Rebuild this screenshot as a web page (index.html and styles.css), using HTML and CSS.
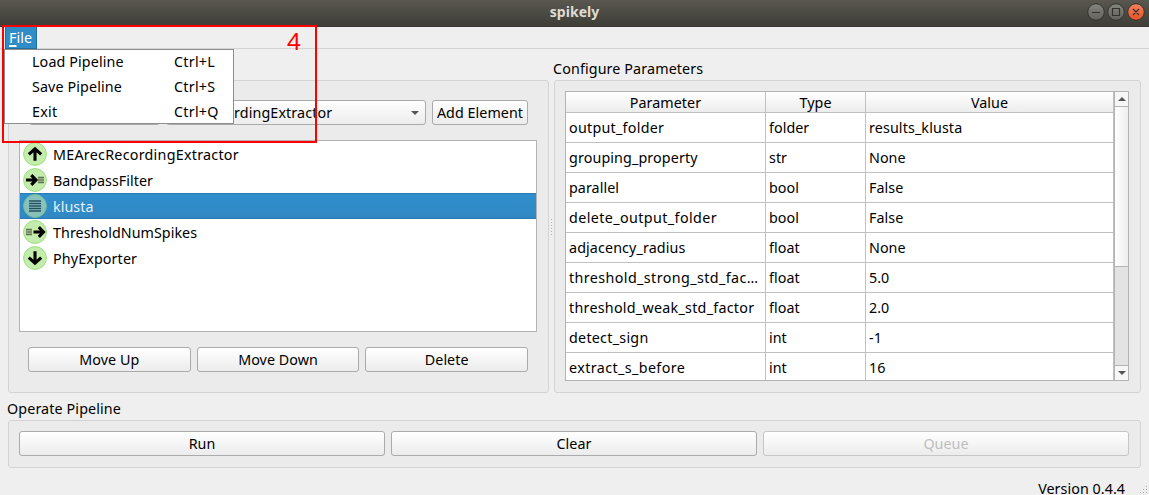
FILE: index.html
```html
<!DOCTYPE html>
<html lang="en">
<head>
<meta charset="utf-8">
<title>spikely</title>
<link rel="stylesheet" href="styles.css">
</head>
<body>
<div class="window">
  <header class="titlebar">
    <span class="title">spikely</span>
    <svg class="controls" width="58" height="20" viewBox="0 0 58 20">
      <defs>
        <linearGradient id="gray" x2="0" y2="1"><stop offset="0" stop-color="#858580"/><stop offset="1" stop-color="#62615c"/></linearGradient>
        <linearGradient id="orange" x2="0" y2="1"><stop offset="0" stop-color="#f58360"/><stop offset="1" stop-color="#e65123"/></linearGradient>
      </defs>
      <g stroke="#33322e"><circle cx="9" cy="10" r="8.3" fill="url(#gray)"/><circle cx="29" cy="10" r="8.3" fill="url(#gray)"/><circle cx="49" cy="10" r="8.3" fill="url(#orange)"/></g>
      <path d="M5 10.5H13M25.5 6.5H32.5V13.5H25.5ZM46 7L52 13M52 7L46 13" fill="none" stroke="#33322e" stroke-width="1.2"/>
    </svg>
  </header>
  <nav class="menubar"><span class="menu-title"><u>F</u>ile</span></nav>

  <main class="panes">
    <section class="pane pipeline">
      <h2 class="caption">&nbsp;</h2>
      <div class="group build">
        <div class="chooser">
          <div class="button combo kind"></div>
          <div class="button combo element"><span class="loose">rdingExtractor</span><i class="down"></i></div>
          <div class="button add"><span>Add Element</span></div>
        </div>
        <ul class="elements">
          <li><svg class="icon" viewBox="0 0 24 24"><circle class="disc" cx="12" cy="12" r="11.4"/><path class="bold" d="M12 18.8V7M5.8 12.4L12 6.8L18.2 12.4"/></svg><span class="wide">MEArecRecordingExtractor</span></li>
          <li><svg class="icon" viewBox="0 0 24 24"><circle class="disc" cx="12" cy="12" r="11.4"/><path class="bold" d="M3 12H12M8.3 7.2L13 12L8.3 16.8"/><path class="fine" d="M15 9.3H21M15 11.1H21M15 12.9H21M15 14.7H21"/></svg><span>BandpassFilter</span></li>
          <li class="selected"><svg class="icon" viewBox="0 0 24 24"><circle class="disc" cx="12" cy="12" r="11.4"/><path class="lines" d="M6 7H18M6 9.5H18M6 12H18M6 14.5H18M6 17H18"/></svg><span>klusta</span></li>
          <li><svg class="icon" viewBox="0 0 24 24"><circle class="disc" cx="12" cy="12" r="11.4"/><path class="bold" d="M10.5 12H20M15.8 7.2L20.5 12L15.8 16.8"/><path class="fine" d="M3 9.3H9M3 11.1H9M3 12.9H9M3 14.7H9"/></svg><span>ThresholdNumSpikes</span></li>
          <li><svg class="icon" viewBox="0 0 24 24"><circle class="disc" cx="12" cy="12" r="11.4"/><path class="bold" d="M12 5.2V17M5.8 11.6L12 17.2L18.2 11.6"/></svg><span class="loose">PhyExporter</span></li>
        </ul>
        <div class="actions">
          <div class="button"><span>Move Up</span></div>
          <div class="button"><span>Move Down</span></div>
          <div class="button"><span>Delete</span></div>
        </div>
      </div>
    </section>
    <svg class="grip" width="5" height="18" viewBox="0 0 5 18"><path d="M2.5 1V18" stroke="#b0b0b0" stroke-dasharray="1 2"/></svg>
    <section class="pane">
      <h2 class="caption loose">Configure Parameters</h2>
      <div class="group params">
        <div class="table">
          <div class="grid">
            <div class="head">Parameter</div><div class="head">Type</div><div class="head">Value</div>
            <div class="wide">output_folder</div><div>folder</div><div class="loose">results_klusta</div>
            <div class="loose">grouping_property</div><div>str</div><div>None</div>
            <div>parallel</div><div>bool</div><div>False</div>
            <div class="wider">delete_output_folder</div><div>bool</div><div>False</div>
            <div class="loose">adjacency_radius</div><div>float</div><div>None</div>
            <div class="wider">threshold_strong_std_fac…</div><div>float</div><div>5.0</div>
            <div class="wide">threshold_weak_std_factor</div><div>float</div><div>2.0</div>
            <div class="wide">detect_sign</div><div>int</div><div>-1</div>
            <div class="wider">extract_s_before</div><div>int</div><div>16</div>
          </div>
          <div class="scrollbar"><div class="step"><i class="up"></i></div><div class="thumb"></div><div class="trough"></div><div class="step"><i class="down"></i></div></div>
        </div>
      </div>
    </section>
  </main>

  <section class="operate">
    <h2 class="caption low loose">Operate Pipeline</h2>
    <div class="group run">
      <div class="button"><span>Run</span></div>
      <div class="button"><span>Clear</span></div>
      <div class="button disabled"><span>Queue</span></div>
    </div>
  </section>
  <footer class="status"><span>Version 0.4.4</span>
    <svg class="sizegrip" width="8" height="9" viewBox="0 0 8 9"><path d="M6 0h1v1h-1zM3 3h1v1h-1zM6 3h1v1h-1zM0 6h1v1h-1zM3 6h1v1h-1zM6 6h1v1h-1z" fill="#aaa"/></svg>
  </footer>

  <div class="menu">
    <span class="loose">Load Pipeline</span><span class="wide">Ctrl+L</span>
    <span class="loose">Save Pipeline</span><span class="wide">Ctrl+S</span>
    <span class="wide">Exit</span><span class="wide">Ctrl+Q</span>
  </div>
  <div class="callout"><span>4</span></div>
</div>
</body>
</html>
```
FILE: styles.css
```css
* { box-sizing: border-box; }
body { margin: 0; background: #efefef; color: #000; font: 14.3px/20px "Noto Sans", "Open Sans", sans-serif; letter-spacing: .05px; overflow: hidden; }
.loose { letter-spacing: .12px; }
.wide { letter-spacing: .26px; }
.wider { letter-spacing: .4px; }
.window { position: relative; width: 1149px; height: 495px; overflow: hidden; display: flex; flex-direction: column; white-space: nowrap; }
.titlebar { flex: none; height: 27px; background: linear-gradient(#59574f, #3e3d38); display: grid; grid-template-columns: 1fr auto 1fr; align-items: center; color: #dfdbd2; border-bottom: 1px solid #3a3935; }
.title { grid-column: 2; font-weight: 700; font-size: 14px; margin-top: -2px; }
.controls { justify-self: end; margin-right: 4px; margin-top: -3px; }
.menubar { flex: none; height: 22px; padding-left: 5px; border-bottom: 1px solid #d3d3d3; }
.menu-title { display: block; width: 32px; height: 22px; padding: 1px 0 0 3px; background: #308cc6; border: 1px solid #236d9b; border-top: 0; color: #fff; line-height: 20px; }
.menu-title u { text-underline-offset: 2px; text-decoration-thickness: 2px; }
.panes { flex: none; height: 344px; padding: 0 8px; display: flex; }
.pane { display: flex; flex-direction: column; width: 587px; }
.pipeline { width: 541px; }
.caption { margin: 0 0 0 -1px; height: 31px; padding-top: 10px; font-size: inherit; font-weight: 400; line-height: 20px; }
.caption.low { height: 27px; padding-top: 6px; }
.group { background: #ebebeb; border: 1px solid #d3d3d3; border-radius: 3px; flex: 1; }
.build { padding: 19px 11px 20px 10px; display: flex; flex-direction: column; }
.chooser { display: flex; gap: 6px; padding: 0 9px 0 10px; }
.button { height: 25px; flex: 1; border: 1px solid #ababab; border-radius: 3px; background: linear-gradient(#fff, #ececec); display: flex; align-items: center; justify-content: center; }
.chooser .combo { justify-content: space-between; padding: 0 6px 0 67px; }
.chooser .kind { flex: 0 0 131px; }
.chooser .element { flex: 0 0 260px; }
.down, .up { border: 4px solid transparent; border-bottom: 0; border-top-color: #555; width: 0; height: 0; }
.up { border: 4px solid transparent; border-top: 0; border-bottom-color: #555; }
.elements { height: 192px; margin: 15px 0; padding: 0; border: 1px solid #b3b3b3; background: #fff; list-style: none; }
.elements li { height: 26px; padding-left: 3px; display: flex; align-items: center; gap: 6px; }
.elements li span { padding-top: 2px; }
.elements .selected { background: linear-gradient(#308fce, #3088c2); border: solid #2a7ab0; border-width: 1px 0; color: #e3f1fa; }
.selected .icon { opacity: .58; filter: saturate(.9); }
.icon { width: 24px; height: 24px; }
.disc { fill: #c4ecad; stroke: #9be079; stroke-width: 1; }
.bold { fill: none; stroke: #000; stroke-width: 3.1; }
.lines { fill: none; stroke: #20251d; stroke-width: 1.3; }
.fine { fill: none; stroke: #4a5244; stroke-width: 1; }
.actions { display: flex; gap: 6px; padding: 0 9px; }
.grip { width: 5px; margin-top: 169px; }
.params { padding: 10px 11px 11px 10px; }
.table { height: 290px; border: 1px solid #b3b3b3; background: #fff; display: flex; overflow: hidden; }
.grid { width: 548px; display: grid; grid-template-columns: 200px 100px 248px; grid-template-rows: 21px; grid-auto-rows: 30px; }
.grid > div { border-right: 1px solid #c0c0c0; border-bottom: 1px solid #c0c0c0; padding: 5px 0 0 3px; line-height: 20px; }
.grid > .head { padding: 1px 0 0; text-align: center; line-height: 20px; background: linear-gradient(#fff, #ececec); }
.scrollbar { width: 15px; border-left: 1px solid #b3b3b3; display: flex; flex-direction: column; }
.step { height: 14px; display: flex; align-items: center; justify-content: center; background: #f6f6f6; }
.thumb { height: 161px; border: solid #b3b3b3; border-width: 1px 0; background: linear-gradient(90deg, #fff, #eee); }
.trough { flex: 1; background: #e3e3e3; border-bottom: 1px solid #b3b3b3; }
.operate { flex: none; height: 75px; padding: 0 8px; display: flex; flex-direction: column; }
.run { padding: 10px 11px 10px 10px; display: flex; gap: 6px; }
.disabled { color: #bebebe; border-color: #c6c6c6; }
.status { height: 27px; padding: 15px 1px 0 0; display: flex; justify-content: flex-end; gap: 15px; line-height: 12px; }
.sizegrip { margin-top: 3px; }
.menu { position: absolute; left: 4px; top: 49px; width: 230px; height: 75px; padding: 0 0 0 27px; background: #fff; border: 1px solid #8e8e8e; display: grid; grid-template-columns: 142px 1fr; grid-auto-rows: 25px; line-height: 24px; }
.callout { position: absolute; left: 2px; top: 25px; width: 315px; height: 118px; border: 2px solid #f00; color: #f00; font: 24px/28px "Noto Sans", sans-serif; }
.callout span { display: block; margin: 0 0 0 283px; }
```
